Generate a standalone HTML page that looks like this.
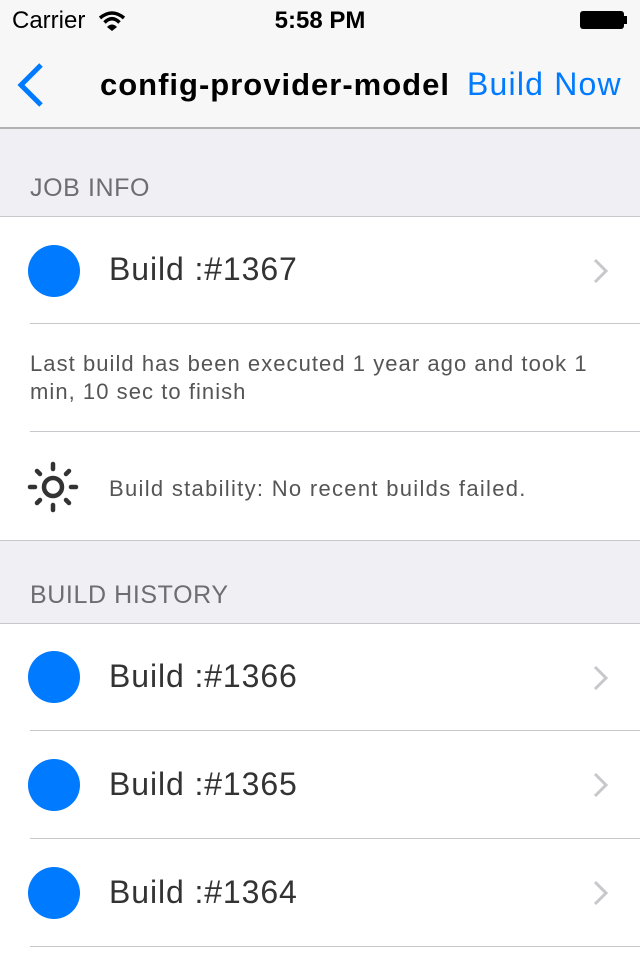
<!DOCTYPE html>
<html><head><meta charset="utf-8"><style>
*{margin:0;padding:0;box-sizing:border-box}
body{width:640px;height:960px;overflow:hidden;background:#fff;font-family:"Liberation Sans",sans-serif;position:relative}
.abs{position:absolute}
.nav{left:0;top:0;width:640px;height:129px;background:#f7f7f7;border-bottom:2px solid #b2b2b2}
.hdr{left:0;width:640px;background:#efeff4;border-bottom:1px solid #c8c7cc;color:#6d6d72;font-size:25px;padding-left:30px;letter-spacing:0.6px}
.row{left:0;width:640px;background:#fff}
.dot{position:absolute;left:28px;width:52px;height:52px;border-radius:50%;background:#007aff}
.bt{position:absolute;left:109px;font-size:32px;color:#333;letter-spacing:0.9px}
.sep{position:absolute;left:30px;right:0;height:1px;background:#c8c7cc}
.chev{position:absolute;left:592px}
</style></head><body>
<div class="abs nav">
<div class="abs" style="left:12px;top:7px;font-size:24px;color:#000">Carrier</div>
<svg class="abs" style="left:98px;top:10px" width="28" height="22" viewBox="0 0 28 22"><path d="M2 8 Q14 -2 26 8" stroke="#000" stroke-width="3.5" fill="none"/><path d="M6.5 12.5 Q14 5 21.5 12.5" stroke="#000" stroke-width="3.5" fill="none"/><path d="M9 17 L14 21 L19 17 Q14 12 9 17Z" fill="#000"/></svg>
<div class="abs" style="left:0;width:640px;text-align:center;top:7px;font-size:24px;font-weight:bold;color:#000">5:58 PM</div>
<div class="abs" style="left:580px;top:11px;width:44px;height:18px;border-radius:3px;background:#000"></div>
<div class="abs" style="left:624px;top:16px;width:3px;height:8px;background:#000"></div>
<svg class="abs" style="left:14px;top:62px" width="32" height="46" viewBox="0 0 32 46"><path d="M27 3 L7 23 L27 43" stroke="#007aff" stroke-width="5" fill="none"/></svg>
<div class="abs" style="left:100px;top:67px;font-size:31px;font-weight:bold;color:#000;letter-spacing:1px">config-provider-model</div>
<div class="abs" style="left:467px;top:66px;font-size:32px;color:#007aff;letter-spacing:1.2px">Build Now</div>
</div>
<div class="abs hdr" style="top:129px;height:88px;padding-top:45px">JOB INFO</div>
<div class="abs row" style="top:217px;height:107px"><div class="dot" style="top:28px"></div><div class="bt" style="top:34px">Build :#1367</div>
<svg class="chev" style="top:41px" width="18" height="26" viewBox="0 0 18 26"><path d="M3 2 L14 13 L3 24" stroke="#c7c7cc" stroke-width="3" fill="none"/></svg><div class="sep" style="top:106px"></div></div>
<div class="abs row" style="top:324px;height:108px"><div class="abs" style="left:30px;top:26px;width:590px;font-size:22px;line-height:28px;color:#555;letter-spacing:1.05px">Last build has been executed 1 year ago and took 1 min, 10 sec to finish</div><div class="sep" style="top:107px"></div></div>
<div class="abs row" style="top:432px;height:108px">
<svg class="abs" style="left:27px;top:29px" width="52" height="52" viewBox="0 0 52 52"><circle cx="26" cy="26" r="9" stroke="#333" stroke-width="4.5" fill="none"/><g stroke="#333" stroke-width="4.5" stroke-linecap="round"><line x1="26" y1="3" x2="26" y2="8"/><line x1="26" y1="44" x2="26" y2="49"/><line x1="3" y1="26" x2="8" y2="26"/><line x1="44" y1="26" x2="49" y2="26"/><line x1="10" y1="10" x2="13" y2="13"/><line x1="39" y1="39" x2="42" y2="42"/><line x1="42" y1="10" x2="39" y2="13"/><line x1="10" y1="42" x2="13" y2="39"/></g></svg>
<div class="abs" style="left:109px;top:44px;font-size:22px;color:#555;letter-spacing:1.3px">Build stability: No recent builds failed.</div></div>
<div class="abs hdr" style="top:540px;height:84px;border-top:1px solid #c8c7cc;padding-top:40px">BUILD HISTORY</div>
<div class="abs row" style="top:624px;height:107px"><div class="dot" style="top:27px"></div><div class="bt" style="top:34px">Build :#1366</div><svg class="chev" style="top:41px" width="18" height="26" viewBox="0 0 18 26"><path d="M3 2 L14 13 L3 24" stroke="#c7c7cc" stroke-width="3" fill="none"/></svg><div class="sep" style="top:106px"></div></div>
<div class="abs row" style="top:731px;height:108px"><div class="dot" style="top:28px"></div><div class="bt" style="top:35px">Build :#1365</div><svg class="chev" style="top:41px" width="18" height="26" viewBox="0 0 18 26"><path d="M3 2 L14 13 L3 24" stroke="#c7c7cc" stroke-width="3" fill="none"/></svg><div class="sep" style="top:107px"></div></div>
<div class="abs row" style="top:839px;height:108px"><div class="dot" style="top:28px"></div><div class="bt" style="top:35px">Build :#1364</div><svg class="chev" style="top:41px" width="18" height="26" viewBox="0 0 18 26"><path d="M3 2 L14 13 L3 24" stroke="#c7c7cc" stroke-width="3" fill="none"/></svg><div class="sep" style="top:107px"></div></div>
</body></html>
